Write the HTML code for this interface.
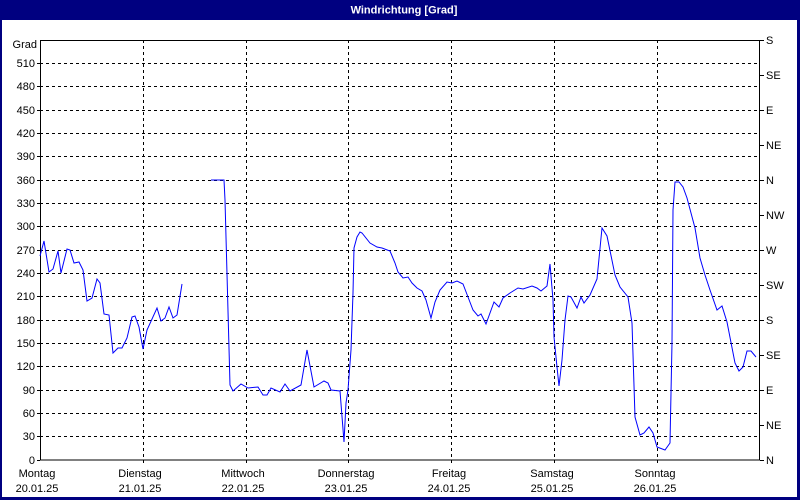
<!DOCTYPE html>
<html><head><meta charset="utf-8"><style>
html,body{margin:0;padding:0;background:#fff;}
svg{display:block;}
text{font-family:"Liberation Sans","DejaVu Sans",sans-serif;font-size:11px;fill:#000;}
</style></head><body>
<svg width="800" height="500" viewBox="0 0 800 500" xmlns="http://www.w3.org/2000/svg" shape-rendering="crispEdges">
<rect x="0" y="0" width="800" height="500" fill="#000080"/>
<rect x="2" y="20" width="795" height="477" fill="#fff"/>
<text x="404" y="13.5" text-anchor="middle" style="fill:#fff;font-weight:bold;font-size:11px">Windrichtung [Grad]</text>
<g stroke="#000" stroke-width="1" stroke-dasharray="3,3" fill="none">
<path d="M40 63.5H760M40 86.5H760M40 110.5H760M40 133.5H760M40 156.5H760M40 180.5H760M40 203.5H760M40 226.5H760M40 250.5H760M40 273.5H760M40 296.5H760M40 320.5H760M40 343.5H760M40 366.5H760M40 390.5H760M40 413.5H760M40 436.5H760"/>
<path d="M143.5 40V463M246.5 40V463M348.5 40V463M451.5 40V463M554.5 40V463M657.5 40V463"/>
</g>
<g stroke="#000" stroke-width="1" fill="none">
<rect x="40.5" y="40.5" width="719" height="419.5"/>
<path d="M37 63.5H40M37 86.5H40M37 110.5H40M37 133.5H40M37 156.5H40M37 180.5H40M37 203.5H40M37 226.5H40M37 250.5H40M37 273.5H40M37 296.5H40M37 320.5H40M37 343.5H40M37 366.5H40M37 390.5H40M37 413.5H40M37 436.5H40M37 460.5H40"/>
<path d="M760 40.5H764M760 75.5H764M760 110.5H764M760 145.5H764M760 180.5H764M760 215.5H764M760 250.5H764M760 285.5H764M760 320.5H764M760 355.5H764M760 390.5H764M760 425.5H764M760 460.5H764"/>
</g>
<g text-anchor="end">
<text x="37" y="48">Grad</text>
<text x="35" y="67">510</text><text x="35" y="90">480</text><text x="35" y="114">450</text><text x="35" y="137">420</text><text x="35" y="160">390</text><text x="35" y="184">360</text><text x="35" y="207">330</text><text x="35" y="230">300</text><text x="35" y="254">270</text><text x="35" y="277">240</text><text x="35" y="300">210</text><text x="35" y="324">180</text><text x="35" y="347">150</text><text x="35" y="370">120</text><text x="35" y="394">90</text><text x="35" y="417">60</text><text x="35" y="440">30</text><text x="35" y="464">0</text>
</g>
<g>
<text x="766" y="44">S</text><text x="766" y="79">SE</text><text x="766" y="114">E</text><text x="766" y="149">NE</text><text x="766" y="184">N</text><text x="766" y="219">NW</text><text x="766" y="254">W</text><text x="766" y="289">SW</text><text x="766" y="324">S</text><text x="766" y="359">SE</text><text x="766" y="394">E</text><text x="766" y="429">NE</text><text x="766" y="464">N</text>
</g>
<g text-anchor="middle">
<text x="37" y="477">Montag</text><text x="37" y="492">20.01.25</text>
<text x="140" y="477">Dienstag</text><text x="140" y="492">21.01.25</text>
<text x="243" y="477">Mittwoch</text><text x="243" y="492">22.01.25</text>
<text x="346" y="477">Donnerstag</text><text x="346" y="492">23.01.25</text>
<text x="449" y="477">Freitag</text><text x="449" y="492">24.01.25</text>
<text x="552" y="477">Samstag</text><text x="552" y="492">25.01.25</text>
<text x="655" y="477">Sonntag</text><text x="655" y="492">26.01.25</text>
</g>
<g stroke="#0000ff" stroke-width="1" fill="none" shape-rendering="auto">
<polyline points="40,256 44,241 49,272 53,269 58,251 61,273 67,249 70,250 74,263 79,262 83,270 87,301 92,298 97,279 100,283 104,314 109,315 113,353 118,348 122,348 127,338 132,317 135,316 139,327 143,349 147,330 157,308 161,321 165,318 169,307 173,318 177,315 182,284"/>
<polyline points="211,180 224,180 225,200 230,385 233,391 241,384 248,388 258,387 263,395 267,395 271,388 280,392 285,384 290,391 301,385 307,350 314,387 324,381 328,383 331,390 340,391 344,442 346,403 348,390 351,350 353,293 354,248 357,237 360,232 362,233 370,243 377,247 382,248 390,251 395,263 398,272 403,278 408,277 412,283 417,288 422,291 426,300 431,318 435,302 440,290 447,282 452,283 457,281 463,284 468,297 473,310 478,316 481,314 486,324 494,302 499,307 503,298 510,293 518,288 523,289 532,286 537,288 541,291 547,286 550,264 551,276 553,300 554,337 557,367 559,386 562,360 565,320 568,296 571,297 577,308 581,297 584,303 590,295 597,279 602,228 607,236 615,275 620,287 628,297 632,323 635,417 640,435 644,433 649,427 653,433 657,447 665,450 670,443 672,343 673,210 675,182 679,182 683,187 687,198 695,228 700,258 705,275 710,290 717,310 722,306 727,322 735,363 739,371 743,367 747,351 751,351 756,357"/>
</g>
</svg>
</body></html>
